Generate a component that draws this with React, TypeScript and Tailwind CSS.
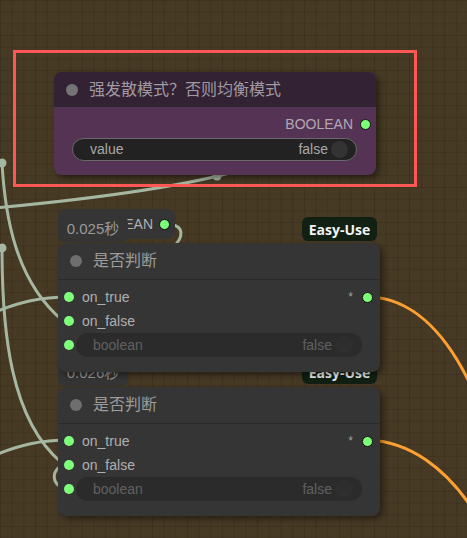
import React from "react";

const font = "font-['Liberation_Sans','Noto_Sans_CJK_SC',sans-serif]";

const Dot = ({ outline = false }: { outline?: boolean }) => (
  <span
    className={
      outline
        ? "block w-[11px] h-[11px] rounded-full bg-[#7dff7a] border border-[#111]"
        : "block w-[10px] h-[10px] rounded-full bg-[#7dff7a]"
    }
  />
);

const Badge = ({ text, className }: { text: string; className: string }) => (
  <div
    className={
      "absolute flex items-center justify-center rounded-md bg-[#353535] text-[15px] text-[#9a9a9a] " +
      font +
      " " +
      className
    }
  >
    {text}
  </div>
);

const EasyUse = ({ className }: { className: string }) => (
  <div
    className={
      "absolute flex items-center justify-center rounded-md bg-[#112012] text-[14px] font-bold text-[#f2f2f2] font-['Open_Sans',sans-serif] " +
      className
    }
  >
    Easy-Use
  </div>
);

const IfNode = ({ className }: { className: string }) => (
  <div
    className={
      "absolute w-[322px] rounded-lg bg-[#353535] shadow-[3px_3px_6px_rgba(0,0,0,0.45)] " +
      font +
      " " +
      className
    }
  >
    <div className="flex h-[37px] items-center gap-[11px] border-b border-[#2a2a2a] pl-3">
      <span className="block h-3 w-3 rounded-full bg-[#6f6f6f]" />
      <span className="text-[16px] text-[#9c9c9c]">是否判断</span>
    </div>
    <div className="flex flex-col pb-[15px] pt-[5px]">
      <div className="flex h-6 items-center pl-[6px] pr-[7px]">
        <Dot />
        <span className="ml-2 text-[14px] text-[#b0b0b0]">on_true</span>
        <span className="ml-auto mr-[9px] text-[12px] text-[#a0a0a0]">*</span>
        <Dot outline />
      </div>
      <div className="flex h-6 items-center pl-[6px]">
        <Dot />
        <span className="ml-2 text-[14px] text-[#b0b0b0]">on_false</span>
      </div>
      <div className="flex h-6 items-center pl-[6px]">
        <Dot />
        <div className="ml-[2px] flex h-6 w-[286px] items-center rounded-full bg-[#2b2b2b] pl-[17px] pr-[9px] text-[14px] text-[#606060]">
          <span>boolean</span>
          <span className="ml-auto">false</span>
          <span className="ml-[3px] block h-[18px] w-[18px] rounded-full bg-[#2e2e2e]" />
        </div>
      </div>
    </div>
  </div>
);

export default function App() {
  return (
    <div className="relative h-[538px] w-[467px] overflow-hidden bg-[#473a25] bg-[linear-gradient(to_right,rgba(30,24,12,0.2)_1px,transparent_1px),linear-gradient(to_bottom,rgba(30,24,12,0.2)_1px,transparent_1px)] bg-size-[11.7px_11.7px]">
      {/* wires */}
      <svg className="absolute inset-0" width="467" height="538" fill="none">
        <g stroke="#a6b7a1" strokeWidth="3" strokeLinecap="round">
          <path d="M240 170 C180 188, 80 200, -5 208" />
          <path d="M2 163 C5 215, 15 280, 62 320" />
          <path d="M2 248 C2 330, 10 420, 62 463" />
          <path d="M-5 312 C20 302, 40 297, 69 297" />
          <path d="M-5 455 C20 445, 40 440, 69 440" />
          <path d="M70 463 C48 466, 50 489, 70 489" />
          <path d="M165 224 C186 224, 184 238, 172 248" />
        </g>
        <circle cx="217" cy="176" r="4.5" fill="#a6b7a1" />
        <circle cx="2" cy="163" r="4.5" fill="#a6b7a1" />
        <circle cx="2" cy="248" r="4.5" fill="#a6b7a1" />
        <g stroke="#ffa132" strokeWidth="3" strokeLinecap="round">
          <path d="M369 297 C410 298, 445 330, 472 388" />
          <path d="M369 440 C410 442, 445 468, 472 508" />
        </g>
      </svg>

      {/* node peeking out behind */}
      <div
        className={
          "absolute left-[58px] top-[209px] flex h-[30px] w-[117px] items-center justify-end gap-[6px] rounded-lg bg-[#353535] pr-[5px] text-[14px] text-[#b0b0b0] " +
          font
        }
      >
        <span>BOOLEAN</span>
        <Dot outline />
      </div>

      {/* third node */}
      <Badge text="0.026秒" className="left-[58px] top-[361px] h-[25px] w-[70px]" />
      <EasyUse className="left-[302px] top-[360px] h-[24px] w-[75px]" />
      <IfNode className="top-[387px] left-[58px]" />

      {/* second node */}
      <Badge text="0.025秒" className="left-[58px] top-[216px] h-[26px] w-[70px]" />
      <EasyUse className="left-[302px] top-[217px] h-[24px] w-[75px]" />
      <IfNode className="top-[243px] left-[58px]" />

      {/* purple boolean node */}
      <div
        className={
          "absolute left-[54px] top-[72px] w-[322px] overflow-hidden rounded-lg bg-[#553355] shadow-[3px_3px_6px_rgba(0,0,0,0.45)] " +
          font
        }
      >
        <div className="flex h-[35px] items-center gap-[11px] bg-[#332233] pl-3">
          <span className="block h-3 w-3 rounded-full bg-[#747474]" />
          <span className="text-[16px] text-[#a09aa2]">强发散模式？否则均衡模式</span>
        </div>
        <div className="flex flex-col pb-[14px] pt-[5px]">
          <div className="flex h-6 items-center justify-end gap-[7px] pr-[5px]">
            <span className="text-[14px] text-[#b2a8b2]">BOOLEAN</span>
            <Dot outline />
          </div>
          <div className="ml-[18px] mt-[2px] flex h-[23px] w-[285px] items-center rounded-full border border-[#6a6a6a] bg-[#222222] pl-[17px] pr-[8px] text-[14px] text-[#a8a8a8]">
            <span>value</span>
            <span className="ml-auto">false</span>
            <span className="ml-[3px] block h-[17px] w-[17px] rounded-full bg-[#333333]" />
          </div>
        </div>
      </div>

      {/* highlight frame */}
      <div className="absolute left-[13px] top-[50px] h-[137px] w-[404px] border-[3px] border-[#ff5656]" />
    </div>
  );
}
